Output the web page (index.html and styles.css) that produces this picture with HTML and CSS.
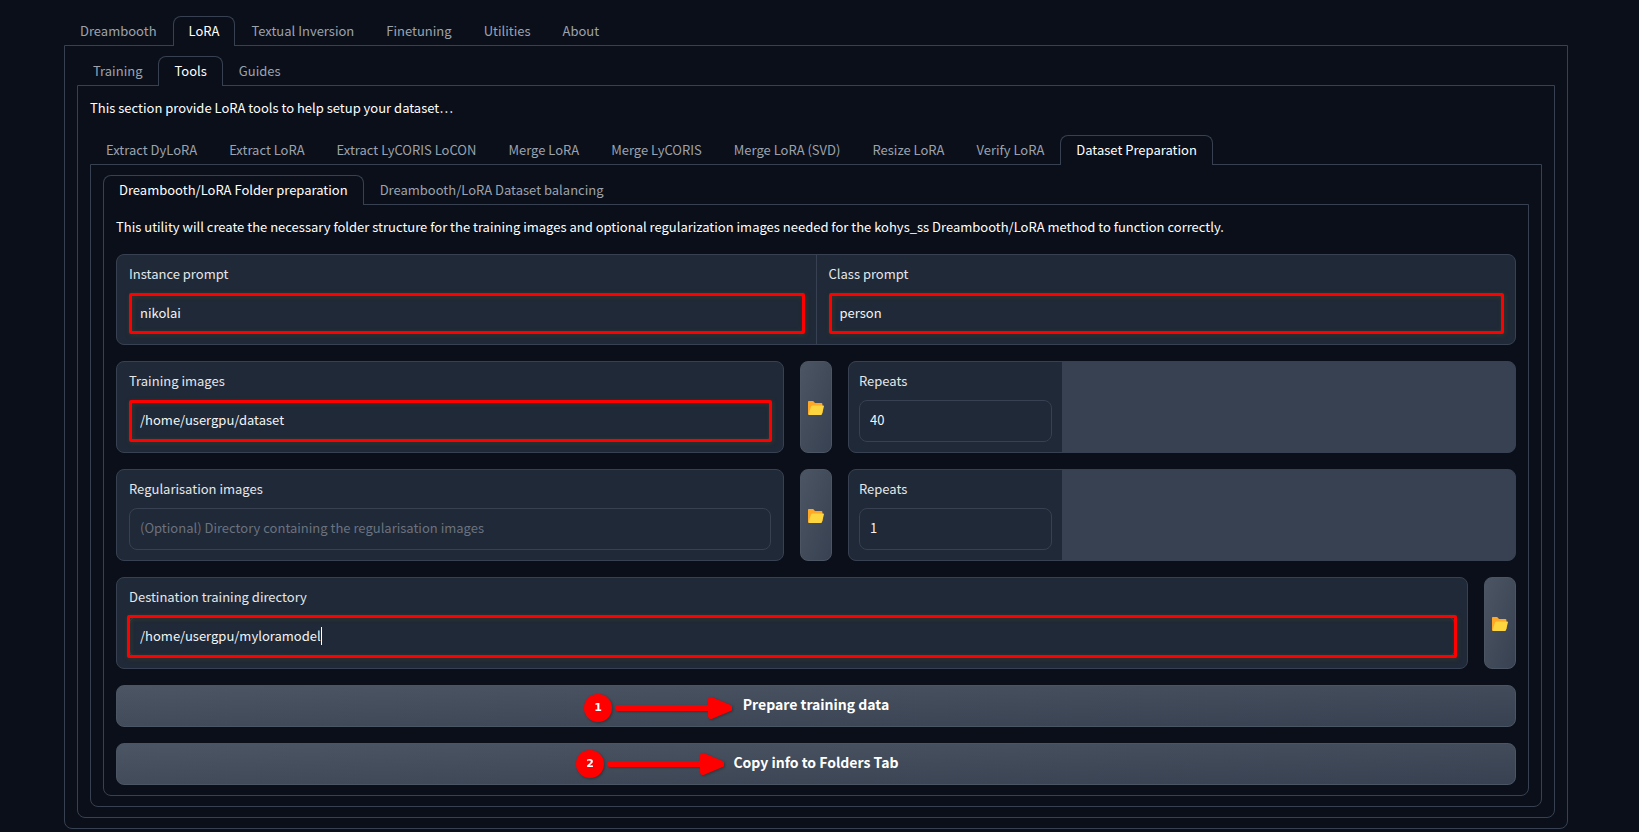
FILE: index.html
```html
<!DOCTYPE html>
<html lang="en">
<head>
    <meta charset="UTF-8">
    <meta name="viewport" content="width=device-width, initial-scale=1.0">
    <title>Kohya_ss GUI</title>
    <link rel="stylesheet" href="styles.css">
</head>
<body>
    <svg class="defs" aria-hidden="true">
        <symbol id="folder" viewBox="0 0 16 14">
            <path fill="#ffa726" d="M0.8 0H5.2L7 2H13.4Q14.4 2 14.4 3V12L1.4 14Q0 14 0 12.8V0.8Q0 0 0.8 0Z"/>
            <path fill="#fdd53f" d="M4.4 4.4H15.2Q16.2 4.4 15.9 5.4L14 13.2Q13.8 14 12.8 14H1.4Q0.2 14 0.6 12.8L3 5.4Q3.4 4.4 4.4 4.4Z"/>
        </symbol>
        <symbol id="arrow" viewBox="0 0 120 28">
            <path d="M6 14H98" stroke="#f00" stroke-width="6" stroke-linecap="round"/>
            <path d="M99 6L118 14L99 22Z" fill="#f00" stroke="#f00" stroke-width="6" stroke-linejoin="round"/>
        </symbol>
    </svg>

    <main class="page">
        <nav class="tabs">
            <button class="tab">Dreambooth</button>
            <button class="tab active">LoRA</button>
            <button class="tab">Textual Inversion</button>
            <button class="tab">Finetuning</button>
            <button class="tab">Utilities</button>
            <button class="tab">About</button>
        </nav>
        <section class="panel">
            <nav class="tabs">
                <button class="tab">Training</button>
                <button class="tab active">Tools</button>
                <button class="tab">Guides</button>
            </nav>
            <section class="panel">
                <p class="intro">This section provide LoRA tools to help setup your dataset…</p>
                <nav class="tabs">
                    <button class="tab">Extract DyLoRA</button>
                    <button class="tab">Extract LoRA</button>
                    <button class="tab">Extract LyCORIS LoCON</button>
                    <button class="tab">Merge LoRA</button>
                    <button class="tab">Merge LyCORIS</button>
                    <button class="tab">Merge LoRA (SVD)</button>
                    <button class="tab">Resize LoRA</button>
                    <button class="tab">Verify LoRA</button>
                    <button class="tab active">Dataset Preparation</button>
                </nav>
                <section class="panel">
                    <nav class="tabs">
                        <button class="tab active">Dreambooth/LoRA Folder preparation</button>
                        <button class="tab">Dreambooth/LoRA Dataset balancing</button>
                    </nav>
                    <section class="panel">
                        <p class="intro">This utility will create the necessary folder structure for the training images and optional regularization images needed for the kohys_ss Dreambooth/LoRA method to function correctly.</p>

                        <form class="form">
                            <div class="group prompts">
                                <div class="block">
                                    <label for="instance">Instance prompt</label>
                                    <div class="field marked"><input id="instance" type="text" value="nikolai"></div>
                                </div>
                                <div class="block">
                                    <label for="class">Class prompt</label>
                                    <div class="field marked"><input id="class" type="text" value="person"></div>
                                </div>
                            </div>

                            <div class="row">
                                <div class="block card">
                                    <label for="training">Training images</label>
                                    <div class="field marked"><input id="training" type="text" value="/home/usergpu/dataset"></div>
                                </div>
                                <button type="button" class="folder-btn" aria-label="Browse training images"><svg><use href="#folder"/></svg></button>
                                <div class="group">
                                    <div class="block repeats">
                                        <label for="repeats1">Repeats</label>
                                        <div class="field"><input id="repeats1" type="number" value="40"></div>
                                    </div>
                                </div>
                            </div>

                            <div class="row">
                                <div class="block card">
                                    <label for="regularisation">Regularisation images</label>
                                    <div class="field"><input id="regularisation" type="text" placeholder="(Optional) Directory containing the regularisation images"></div>
                                </div>
                                <button type="button" class="folder-btn" aria-label="Browse regularisation images"><svg><use href="#folder"/></svg></button>
                                <div class="group">
                                    <div class="block repeats">
                                        <label for="repeats2">Repeats</label>
                                        <div class="field"><input id="repeats2" type="number" value="1"></div>
                                    </div>
                                </div>
                            </div>

                            <div class="row single">
                                <div class="block card">
                                    <label for="destination">Destination training directory</label>
                                    <div class="field marked wide"><input id="destination" type="text" value="/home/usergpu/myloramodel"><span class="caret"></span></div>
                                </div>
                                <button type="button" class="folder-btn" aria-label="Browse destination directory"><svg><use href="#folder"/></svg></button>
                            </div>

                            <div class="action">
                                <button type="button" class="action-btn">Prepare training data</button>
                                <div class="step step-one"><span class="step-number">1</span><svg class="step-arrow"><use href="#arrow"/></svg></div>
                            </div>
                            <div class="action">
                                <button type="button" class="action-btn">Copy info to Folders Tab</button>
                                <div class="step step-two"><span class="step-number">2</span><svg class="step-arrow"><use href="#arrow"/></svg></div>
                            </div>
                        </form>
                    </section>
                </section>
            </section>
        </section>
    </main>
</body>
</html>
```
FILE: styles.css
```css
* {
    margin: 0;
    padding: 0;
    box-sizing: border-box;
}

body {
    font-family: 'Noto Sans CJK SC', 'Open Sans', sans-serif;
    font-size: 13px;
    line-height: 21px;
    background: #0b0f19;
    color: #f3f4f6;
}

button,
input {
    font: inherit;
    color: inherit;
}

.defs {
    display: none;
}

.page {
    padding: 16px 71px 0 64px;
}

/* tabs */
.tabs {
    display: flex;
    flex-wrap: wrap;
    position: relative;
}

.tab {
    margin-bottom: -1px;
    padding: 3px 15px 5px;
    border: 1px solid transparent;
    border-bottom: 0;
    border-radius: 8px 8px 0 0;
    background: transparent;
    color: #9ca3af;
    white-space: nowrap;
}

.tab.active {
    border-color: #374151;
    background: #0b0f19;
    color: #fff;
}

.panel {
    padding: 10px 12px;
    border: 1px solid #374151;
    border-radius: 0 0 8px 8px;
}

.intro {
    margin-bottom: 16px;
    line-height: 23px;
    color: #fff;
}

/* form */
.form {
    display: flex;
    flex-direction: column;
    gap: 16px;
}

.row {
    display: grid;
    grid-template-columns: 1fr 32px 1fr;
    gap: 16px;
}

.row.single {
    grid-template-columns: 1fr 32px;
}

.group {
    display: flex;
    gap: 1px;
    overflow: hidden;
    border: 1px solid #374151;
    border-radius: 8px;
    background: #374151;
}

.block {
    flex: 1;
    padding: 10px 12px;
    background: #1f2937;
}

.card {
    border: 1px solid #374151;
    border-radius: 8px;
}

.repeats {
    flex: 0 0 32%;
    padding: 10px;
}

label {
    display: block;
    margin-bottom: 10px;
    line-height: 18px;
    color: #e5e7eb;
}

.field {
    position: relative;
}

input {
    display: block;
    width: 100%;
    height: 42px;
    padding: 0 10px 3px;
    border: 1px solid #374151;
    border-radius: 8px;
    outline: none;
    background: #1f2937;
    appearance: textfield;
}

.prompts input {
    height: 41px;
}

input::placeholder {
    color: #6b7280;
}

/* red highlight round a field */
.marked::after {
    content: '';
    position: absolute;
    inset: 0 -1px 0 0;
    border: 3px solid #f00;
    border-radius: 2px;
    filter: drop-shadow(1px 1px 2px rgba(60, 60, 40, 0.8));
    pointer-events: none;
}

.wide::after {
    inset: -1px -2px 0;
}

.caret {
    position: absolute;
    top: 11px;
    left: 192px;
    width: 1px;
    height: 18px;
    background: #fff;
}

.folder-btn {
    display: flex;
    align-items: center;
    justify-content: center;
    padding-top: 2px;
    border: 1px solid #4b5563;
    border-radius: 8px;
    background: linear-gradient(to bottom right, #4b5563, #374151);
}

.folder-btn svg {
    width: 16px;
    height: 14px;
}

.action {
    position: relative;
}

.action-btn {
    display: block;
    width: 100%;
    height: 42px;
    padding-bottom: 3px;
    border: 1px solid #4b5563;
    border-radius: 8px;
    background: linear-gradient(to bottom right, #4b5563, #374151);
    color: #fff;
    font-size: 14px;
    font-weight: 700;
}

/* numbered step arrows */
.step {
    position: absolute;
    top: 9px;
    display: flex;
    align-items: center;
    filter: drop-shadow(1px 1px 1px rgba(40, 40, 40, 0.6));
    pointer-events: none;
}

.step-one {
    left: calc(50% - 232px);
}

.step-two {
    top: 7px;
    left: calc(50% - 240px);
}

.step-number {
    width: 28px;
    height: 28px;
    border-radius: 50%;
    background: #f00;
    color: #fff;
    font: bold 11px/28px 'DejaVu Sans', sans-serif;
    text-align: center;
}

.step-arrow {
    width: 120px;
    height: 28px;
}
```
